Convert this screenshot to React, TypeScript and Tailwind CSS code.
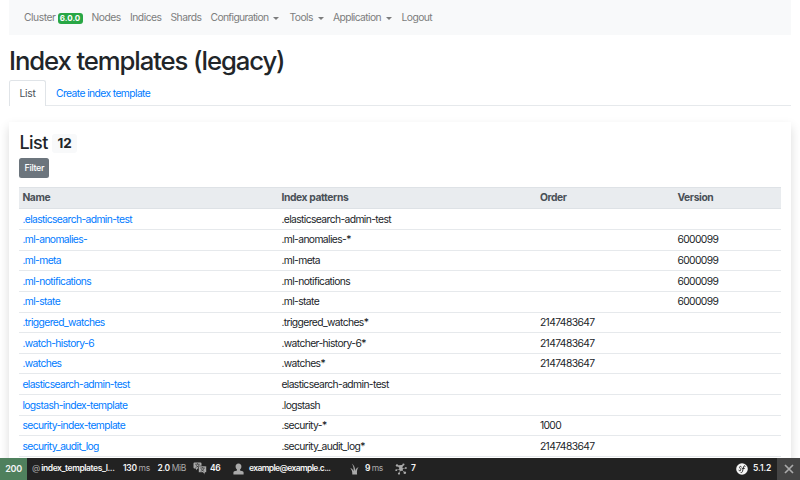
import React from 'react';

type Row = { name: string; pattern: string; order?: string; version?: string };

const rows: Row[] = [
  { name: '.elasticsearch-admin-test', pattern: '.elasticsearch-admin-test' },
  { name: '.ml-anomalies-', pattern: '.ml-anomalies-*', version: '6000099' },
  { name: '.ml-meta', pattern: '.ml-meta', version: '6000099' },
  { name: '.ml-notifications', pattern: '.ml-notifications', version: '6000099' },
  { name: '.ml-state', pattern: '.ml-state', version: '6000099' },
  { name: '.triggered_watches', pattern: '.triggered_watches*', order: '2147483647' },
  { name: '.watch-history-6', pattern: '.watcher-history-6*', order: '2147483647' },
  { name: '.watches', pattern: '.watches*', order: '2147483647' },
  { name: 'elasticsearch-admin-test', pattern: 'elasticsearch-admin-test' },
  { name: 'logstash-index-template', pattern: '.logstash' },
  { name: 'security-index-template', pattern: '.security-*', order: '1000' },
  { name: 'security_audit_log', pattern: '.security_audit_log*', order: '2147483647' },
];

function NavItem({ label, caret, className }: { label: string; caret?: boolean; className: string }) {
  return (
    <a className={`flex shrink-0 items-center whitespace-nowrap ${className}`}>
      {label}
      {caret && (
        <svg className="ml-[5px] h-[3px] w-[6px]" viewBox="0 0 6 3" fill="currentColor">
          <path d="M0 0h6L3 3z" />
        </svg>
      )}
    </a>
  );
}

function Navbar() {
  return (
    <nav className="mr-[9.5px] ml-[9px] flex h-[35px] items-center bg-[#f8f9fa] pt-px pl-[15px] text-[#7c7d7d]">
      <a className="flex w-[67.5px] shrink-0 items-center tracking-[-0.45px]">
        Cluster
        <span className="mt-px ml-[2px] flex h-[11px] w-[25px] items-center justify-center rounded-[3px] bg-[#28a745] text-[8px] font-bold tracking-normal text-white">
          6.0.0
        </span>
      </a>
      <NavItem label="Nodes" className="w-[38.5px] tracking-[-0.5px]" />
      <NavItem label="Indices" className="w-[40.5px] tracking-[-0.5px]" />
      <NavItem label="Shards" className="w-[40px] tracking-[-0.5px]" />
      <NavItem label="Configuration" caret className="w-[79px] tracking-[-0.64px]" />
      <NavItem label="Tools" caret className="w-[43.5px] tracking-[-0.55px]" />
      <NavItem label="Application" caret className="w-[68.5px] tracking-[-0.6px]" />
      <NavItem label="Logout" className="w-[40px] tracking-[-0.54px]" />
    </nav>
  );
}

const columns = 'grid grid-cols-[259px_258.5px_137.5px_106.5px] *:pl-[3px]';

function TemplatesCard() {
  return (
    <section className="mr-[9.5px] ml-[9.4px] mt-[15.5px] h-[400px] bg-white px-[10px] pt-[9px] shadow-[0_5px_10px_rgba(0,0,0,0.15)]">
      <div className="flex h-[24px] items-center">
        <h3 className="w-[32.5px] text-[18px] leading-[24px] font-medium tracking-[-0.5px]">List</h3>
        <span className="mt-[2px] flex h-[19px] w-[25.5px] items-center justify-center rounded-[3px] bg-[#f8f9fa] text-[13.5px] font-bold tracking-[0.1px]">
          12
        </span>
      </div>
      <button className="mt-[3.5px] flex h-[19.5px] w-[30px] items-center justify-center rounded-[2.5px] bg-[#6c757d] text-[9px] font-medium tracking-[-0.35px] text-white">
        Filter
      </button>
      <div className="mt-[9.5px]">
        <div className={`${columns} h-[22.3px] items-center border-y border-[#dee2e6] bg-[#e9ecef] font-bold tracking-[-0.38px] text-[#495057]`}>
          <span>Name</span>
          <span>Index patterns</span>
          <span>Order</span>
          <span>Version</span>
        </div>
        {rows.map((row) => (
          <div key={row.name} className={`${columns} h-[20.65px] items-center border-b border-[#e6e9ec] pt-[0.9px]`}>
            <a className="text-[#007bff]">{row.name}</a>
            <span>{row.pattern}</span>
            <span>{row.order}</span>
            <span>{row.version}</span>
          </div>
        ))}
      </div>
    </section>
  );
}

function TranslationIcon() {
  return (
    <svg className="h-[13px] w-[14px]" viewBox="0 0 14 13">
      <path d="M1.5.5h6a1 1 0 0 1 1 1v4a1 1 0 0 1-1 1H4.7L3 8.2V6.5H1.5a1 1 0 0 1-1-1v-4a1 1 0 0 1 1-1z" fill="#aaa" />
      <path d="M2.2 2.2h4.5M4.5 1.2v1M6 2.3C5.5 4 4.3 5 2.5 5.4M3 2.7c.6 1.4 1.6 2.3 3 2.7" stroke="#222" strokeWidth=".6" fill="none" />
      <path d="M6.500 4h6a1 1 0 0 1 1 1v4.500a1 1 0 0 1-1 1H12v2l-2-2H6.500a1 1 0 0 1-1-1V5a1 1 0 0 1 1-1z" fill="#aaa" stroke="#222" strokeWidth=".6" />
      <path d="M7.300 6h4.400M9.500 5.200V6M11 6.200C10.500 7.900 9.300 8.900 7.600 9.200M8.200 6.700c.6 1.300 1.600 2.200 3 2.500" stroke="#222" strokeWidth=".6" fill="none" />
    </svg>
  );
}

function UserIcon() {
  return (
    <svg className="h-[12px] w-[11px]" viewBox="0 0 11 12" fill="#aaa">
      <path d="M5.500.4c1.900 0 2.900 1.300 2.900 3.100 0 1.300-.6 2.400-1.400 3v.9l2.700.9c.6.2.9.7.9 1.300v1.900H.4V9.600c0-.6.3-1.100.9-1.300L4 7.400v-.9c-.8-.6-1.400-1.700-1.400-3C2.600 1.700 3.600.4 5.500.4z" />
    </svg>
  );
}

function TwigIcon() {
  return (
    <svg className="h-[12px] w-[9px]" viewBox="0 0 9 12" fill="#aaa">
      <path d="M2.300 11.500C2.400 8.700 1.800 6.800.3 5.300c1.800.3 2.800 1.400 3.300 3C3.800 5.200 3.300 2.600 1.800.5c2.400 1.600 3.400 4.600 3.500 7.400.4-2 1.400-3.300 3.300-3.600-1.500 1.500-1.900 3.900-1.500 7.200z" />
    </svg>
  );
}

function HttpClientIcon() {
  return (
    <svg className="h-[12px] w-[12px]" viewBox="0 0 12 12" fill="#aaa">
      <path d="m2 2.500 4 3.500 2.500-4.300M6 6l4.800-1M6 6 1.200 7M6 6l-2 4.500M6 6l3.800 3.800" stroke="#aaa" strokeWidth=".6" />
      <circle cx="6" cy="6" r="2" />
      <circle cx="2" cy="2.400" r="1.200" />
      <circle cx="8.400" cy="1.500" r="1.100" />
      <circle cx="10.900" cy="5" r=".9" />
      <circle cx="1.200" cy="7.200" r=".9" />
      <circle cx="4" cy="10.600" r="1.100" />
      <circle cx="9.800" cy="9.800" r="1.300" />
    </svg>
  );
}

function SymfonyIcon() {
  return (
    <svg className="h-[12px] w-[12px]" viewBox="0 0 12 12">
      <circle cx="6" cy="6" r="5.800" fill="#f5f5f5" />
      <path
        d="M5.400 3.900c0-.9-1.900-.8-1.900.4 0 1.100 1.500 1.300 1.300 2.600-.1 1.100-1.800 1.300-2 .3M9.200 3.300c.1-1-1.200-.9-1.600.5L6.500 8.300c-.3 1.200-1 1.600-1.600 1.200M6.200 5.400h2.200"
        fill="none"
        stroke="#222"
        strokeWidth=".9"
        strokeLinecap="round"
      />
    </svg>
  );
}

function DebugToolbar() {
  return (
    <footer className="fixed inset-x-0 bottom-0 flex h-[22.5px] items-center bg-[#222] text-[8.5px] font-semibold tracking-[-0.1px] whitespace-nowrap text-[#f5f5f5]">
      <div className="flex h-full w-[27px] items-center justify-center bg-[#4f805d] text-[9px] tracking-[-0.3px]">200</div>
      <div className="w-[96px] pl-[5px]">
        <span className="font-normal text-[#aaa]">@</span> <span className="-ml-[1px] tracking-[-0.42px]">index_templates_l...</span>
      </div>
      <div className="w-[34.500px] tracking-[-0.3px]">130 <span className="font-normal text-[#aaa]">ms</span></div>
      <div className="w-[35.500px] tracking-[-0.35px]">2.0 <span className="font-normal text-[#aaa]">MiB</span></div>
      <div className="flex w-[40px] items-center gap-[3px] tracking-[-0.3px]"><TranslationIcon />46</div>
      <div className="flex w-[117px] items-center gap-[5px] tracking-[-0.64px]"><UserIcon /><span className="tracking-[-0.62px]">example@example.c...</span></div>
      <div className="flex w-[45px] items-center gap-[6px] tracking-[-0.4px]"><TwigIcon /><span>9 <span className="font-normal text-[#aaa]">ms</span></span></div>
      <div className="flex items-center gap-[4px]"><HttpClientIcon />7</div>
      <div className="ml-auto flex h-full items-center">
        <div className="flex w-[41px] items-center gap-[5px]"><SymfonyIcon />5.1.2</div>
        <button className="flex h-full w-[23px] items-center justify-center bg-[#444]">
          <svg className="h-[10px] w-[10px]" viewBox="0 0 10 10" stroke="#aaa" strokeWidth="1.7">
            <path d="m1 1 8 8M9 1 1 9" />
          </svg>
        </button>
      </div>
    </footer>
  );
}

export default function App() {
  return (
    <div className="h-[480px] overflow-hidden bg-white font-['Inter','Liberation_Sans',sans-serif] text-[10.3px] leading-[15.5px] tracking-[-0.6px] text-[#212529]">
      <Navbar />
      <h1 className="mx-[9px] mt-[10px] h-[31px] text-[25.700px] leading-[31px] font-medium tracking-[-1.1px] whitespace-nowrap">
        Index templates (legacy)
      </h1>
      <div className="mx-[9px] mt-[4px] flex h-[26px] border-b border-[#e6e9ec]">
        <a className="-mb-px flex w-[37px] items-center justify-center rounded-t-[2.500px] border border-b-0 border-[#e0e4e8] bg-white pt-px tracking-[-0.3px] text-[#495057]">
          List
        </a>
        <a className="flex items-center pt-[2px] pl-[10px] tracking-[-0.59px] text-[#007bff]">Create index template</a>
      </div>
      <TemplatesCard />
      <DebugToolbar />
    </div>
  );
}
